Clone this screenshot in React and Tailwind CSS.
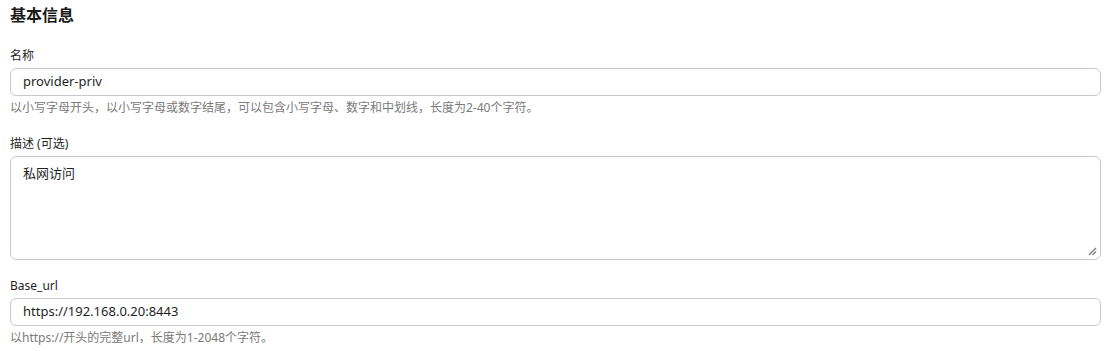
export default function App() {
  const font = { fontFamily: '"Noto Sans", "Noto Sans CJK SC", sans-serif' };
  return (
    <div className="w-[1111px] h-[351px] bg-white px-[10px] text-[#1f1f1f] overflow-hidden" style={font}>
      <h2 className="text-[16px] font-bold leading-[22px] pt-[4px] text-[#1a1a1a]">基本信息</h2>
      <div className="mt-[22px]">
        <label className="block text-[12px] leading-[16px] mb-[4px]">名称</label>
        <div className="h-[28px] border border-[#c9c9c9] rounded-[6px] flex items-center px-[12px] text-[13px]">provider-priv</div>
        <p className="text-[12px] leading-[16px] mt-[4px] text-[#7a7a7a]">以小写字母开头，以小写字母或数字结尾，可以包含小写字母、数字和中划线，长度为2-40个字符。</p>
      </div>
      <div className="mt-[20px]">
        <label className="block text-[12px] leading-[16px] mb-[4px]">描述 (可选)</label>
        <div className="relative h-[104px] border border-[#c9c9c9] rounded-[6px] px-[12px] pt-[7px] text-[13px]">
          私网访问
          <svg className="absolute right-[3px] bottom-[3px]" width="10" height="10" viewBox="0 0 10 10">
            <line x1="9" y1="2" x2="2" y2="9" stroke="#7a7a7a" strokeWidth="1.2" />
            <line x1="9" y1="5.5" x2="5.5" y2="9" stroke="#7a7a7a" strokeWidth="1.2" />
          </svg>
        </div>
      </div>
      <div className="mt-[18px]">
        <label className="block text-[12px] leading-[16px] mb-[4px]">Base_url</label>
        <div className="h-[28px] border border-[#c9c9c9] rounded-[6px] flex items-center px-[12px] text-[13px]">https://192.168.0.20:8443</div>
        <p className="text-[12px] leading-[16px] mt-[4px] text-[#7a7a7a]">以https://开头的完整url，长度为1-2048个字符。</p>
      </div>
    </div>
  );
}
